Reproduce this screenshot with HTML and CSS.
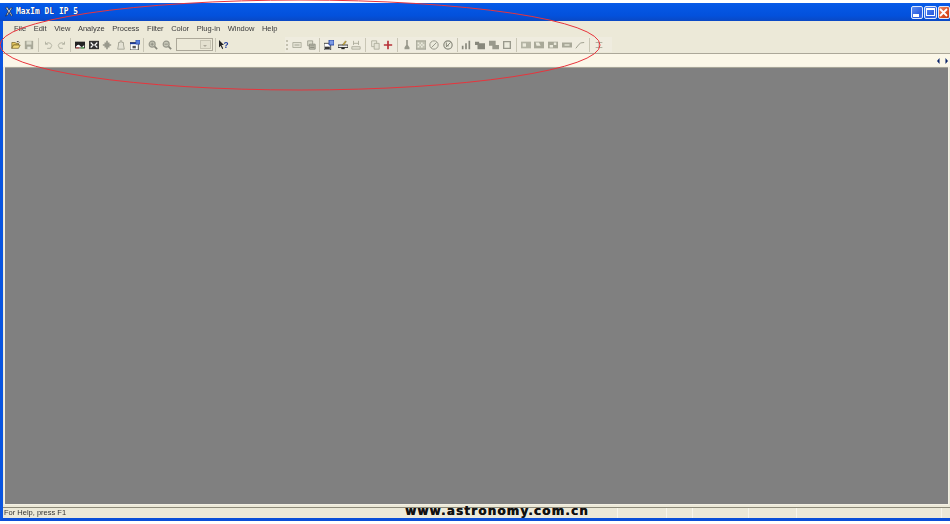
FILE: index.html
```html
<!DOCTYPE html>
<html lang="en">
<head>
<meta charset="utf-8">
<title>MaxIm DL IP 5</title>
<link rel="stylesheet" href="styles.css">
</head>
<body>
<div class="window">
  <header class="titlebar">
    <svg class="app-icon" viewBox="0 0 12 12"><path d="M2 1l3 4-3 6 3-2 1-3 3 5 1-1-3-5 3-4-2 0-2 3-2-4z" fill="#fff" stroke="#111" stroke-width=".7"/></svg>
    <span class="title">MaxIm DL IP 5</span>
    <div class="caption-buttons">
      <div class="cap cap-blue"><span class="min-glyph"></span></div>
      <div class="cap cap-blue"><span class="max-glyph"></span></div>
      <div class="cap cap-red"><svg viewBox="0 0 9 9"><path d="M1 1l7 7M8 1l-7 7" stroke="#fff" stroke-width="1.8"/></svg></div>
    </div>
  </header>
  <nav class="menubar">
    <span>File</span><span>Edit</span><span>View</span><span>Analyze</span><span>Process</span><span>Filter</span><span>Color</span><span>Plug-in</span><span>Window</span><span>Help</span>
  </nav>
  <div class="toolbars">
    <div class="toolbar tb-main">
      <i class="btn"><svg viewBox="0 0 12 12"><path d="M1 3h4l1 1h3v2H3L1 10z" fill="#e8c860" stroke="#6b5a20" stroke-width=".8"/><path d="M1 10l2-4h8l-2 4z" fill="#f0d878" stroke="#6b5a20" stroke-width=".8"/><path d="M7 2q2-1 3 1" stroke="#333" fill="none"/></svg></i>
      <i class="btn"><svg viewBox="0 0 12 12"><path d="M1 1h10v10H1z" fill="#a8a898"/><path d="M3 1.5h6v4H3z" fill="#dcdccc"/><path d="M4 8h4v3H4z" fill="#e4e4d8"/></svg></i>
      <i class="sep"></i>
      <i class="btn"><svg viewBox="0 0 12 12"><path d="M3 5q3-3 6-1t0 6H5M3 2v3h3" fill="none" stroke="#b0b0a0" stroke-width="1.1"/></svg></i>
      <i class="btn"><svg viewBox="0 0 12 12"><path d="M9 5q-3-3-6-1t0 6h4M9 2v3H6" fill="none" stroke="#b0b0a0" stroke-width="1.1"/></svg></i>
      <i class="sep"></i>
      <i class="btn"><svg viewBox="0 0 12 12"><path d="M0 2h12v8H0z" fill="#222"/><path d="M1 8q3-4 5-1t5-1v3H1z" fill="#fff"/><path d="M1 9h4v1H1z" fill="#c33"/><path d="M7 9h4v1H7z" fill="#3a3"/></svg></i>
      <i class="btn"><svg viewBox="0 0 12 12"><path d="M0 1h12v10H0z" fill="#333"/><path d="M2 3l3 3-3 3M10 3L7 6l3 3" fill="none" stroke="#fff" stroke-width="1.4"/></svg></i>
      <i class="btn"><svg viewBox="0 0 12 12"><path d="M5 1h2v2h2v2h2v2H9v2H7v2H5V9H3V7H1V5h2V3h2z" fill="#99998c"/></svg></i>
      <i class="btn"><svg viewBox="0 0 12 12"><path d="M3 6V3h2V1h2v2h2v3l1 5H2z" fill="#e4e2d4" stroke="#a0a090"/></svg></i>
      <i class="btn"><svg viewBox="0 0 12 12"><path d="M0 3h10v9H0z" fill="#fff" stroke="#333"/><path d="M0 3h10v2H0z" fill="#1c3a9c"/><path d="M7 0h5v5H7z" fill="#5a7fd8" stroke="#1c3a9c" stroke-width=".6"/><path d="M3 7h4v3H3z" fill="#555"/></svg></i>
      <i class="sep"></i>
      <i class="btn"><svg viewBox="0 0 12 12"><circle cx="5" cy="5" r="3.6" fill="#c8c8b8" stroke="#99998c" stroke-width="1.4"/><path d="M3 5h4M5 3v4" stroke="#88887c"/><path d="M8 8l3 3" stroke="#88887c" stroke-width="2"/></svg></i>
      <i class="btn"><svg viewBox="0 0 12 12"><circle cx="5" cy="5" r="3.6" fill="#c8c8b8" stroke="#99998c" stroke-width="1.4"/><path d="M3 5h4" stroke="#88887c"/><path d="M8 8l3 3" stroke="#88887c" stroke-width="2"/></svg></i>
      <div class="combo"><span class="combo-arrow"></span></div>
      <i class="sep"></i>
      <i class="btn"><svg viewBox="0 0 12 12"><path d="M0 0v9l2-2 2 4 1-1-2-4h3z" fill="#222"/><text x="5.500" y="9" class="help-mark">?</text></svg></i>
    </div>
    <div class="toolbar tb-second">
      <i class="grip"></i>
      <i class="btn"><svg viewBox="0 0 12 12"><path d="M1 3h10v6H1z" fill="#e4e2d4" stroke="#a8a898"/><path d="M3 5h6v2H3z" fill="#c0c0b0"/></svg></i>
      <i class="btn"><svg viewBox="0 0 12 12"><path d="M2 1h6v6H2z" fill="#dcdccc" stroke="#99998c"/><path d="M4 5h7v6H4z" fill="#c4c4b4" stroke="#88887c"/><path d="M5 7h5M5 9h5" stroke="#88887c"/></svg></i>
      <i class="sep"></i>
      <i class="btn"><svg viewBox="0 0 12 12"><path d="M0 4h8v8H0z" fill="#fff" stroke="#333"/><path d="M1 8h6v3H1z" fill="#333"/><path d="M6 0h6v6H6z" fill="#7d9be4" stroke="#1c3a9c"/></svg></i>
      <i class="btn"><svg viewBox="0 0 12 12"><path d="M0 6h12v3H0z" fill="#eee" stroke="#222"/><path d="M4 9h4v2H4z" fill="#222"/><path d="M5 6l4-5 1 1-3 4z" fill="#d8b030" stroke="#554" stroke-width=".5"/></svg></i>
      <i class="btn"><svg viewBox="0 0 12 12"><path d="M1 8h10v3H1z" fill="#e4e2d4" stroke="#a8a898"/><path d="M3 1v5M9 1v5M3 4h6" stroke="#a8a898"/></svg></i>
      <i class="sep"></i>
      <i class="btn"><svg viewBox="0 0 12 12"><path d="M2 1h6v7H2z" fill="#ecebdd" stroke="#a8a898"/><path d="M5 4h6v7H5z" fill="#e4e2d4" stroke="#a8a898"/></svg></i>
      <i class="btn"><svg viewBox="0 0 12 12"><path d="M5 1h2v4h4v2H7v4H5V7H1V5h4z" fill="#b83038"/></svg></i>
      <i class="sep"></i>
      <i class="btn"><svg viewBox="0 0 12 12"><path d="M5 0h2v6l2 3v2H3V9l2-3z" fill="#99998c"/></svg></i>
      <i class="btn"><svg viewBox="0 0 12 12"><path d="M0 1h12v10H0z" fill="#c0c0b0" stroke="#99998c"/><path d="M2 3h2v2H2zM6 3h2v2H6zM4 5h2v2H4zM8 5h2v2H8zM2 7h2v2H2zM6 7h2v2H6z" fill="#ecebdd"/></svg></i>
      <i class="btn"><svg viewBox="0 0 12 12"><circle cx="6" cy="6" r="5" fill="#ecebdd" stroke="#99998c" stroke-width="1.2"/><path d="M3 9l6-6" stroke="#99998c" stroke-width="1.2"/></svg></i>
      <i class="btn"><svg viewBox="0 0 12 12"><circle cx="6" cy="6" r="5" fill="#ecebdd" stroke="#88887c" stroke-width="1.4"/><path d="M3 9l6-6M4 3v4h3" fill="none" stroke="#88887c" stroke-width="1.2"/></svg></i>
      <i class="sep"></i>
      <i class="btn"><svg viewBox="0 0 12 12"><path d="M1 7h2v4H1zM5 4h2v7H5zM9 1h2v10H9z" fill="#88887c"/></svg></i>
      <i class="btn"><svg viewBox="0 0 12 12"><path d="M0 2h5v2h7v7H3V6H0z" fill="#88887c"/></svg></i>
      <i class="btn"><svg viewBox="0 0 12 12"><path d="M0 1h8v5h4v5H4V7H0z" fill="#99998c"/></svg></i>
      <i class="btn"><svg viewBox="0 0 12 12"><path d="M2 2h8v8H2z" fill="#ecebdd" stroke="#99998c" stroke-width="1.6"/></svg></i>
      <i class="sep"></i>
      <i class="btn"><svg viewBox="0 0 12 12"><path d="M0 2h12v8H0z" fill="#b4b4a4"/><path d="M2 4h4v4H2z" fill="#ecebdd"/></svg></i>
      <i class="btn"><svg viewBox="0 0 12 12"><path d="M0 2h12v8H0z" fill="#a8a898"/><path d="M2 3h4l2 4H3z" fill="#ecebdd"/></svg></i>
      <i class="btn"><svg viewBox="0 0 12 12"><path d="M0 2h12v8H0z" fill="#a8a898"/><path d="M2 6h4v3H2zM7 3h3v3H7z" fill="#ecebdd"/></svg></i>
      <i class="btn"><svg viewBox="0 0 12 12"><path d="M0 3h12v6H0z" fill="#a8a898"/><path d="M3 5h6v2H3z" fill="#dcdccc"/></svg></i>
      <i class="btn"><svg viewBox="0 0 12 12"><path d="M1 10l4-5q1-2 6-2" fill="none" stroke="#a0a090" stroke-width="1.2"/></svg></i>
      <i class="sep"></i>
      <i class="btn"><svg viewBox="0 0 12 12"><path d="M2 3h8M2 9h8M6 3v6" stroke="#b0b0a0" stroke-width="1.2" fill="none"/></svg></i>
    </div>
  </div>
  <div class="tabstrip">
    <svg class="tab-arrows" viewBox="0 0 13 7"><path d="M3 0v7L0 3.500zM10 0v7l3-3.500z" fill="#0a246a"/></svg>
  </div>
  <main class="workspace"></main>
  <footer class="statusbar">
    <span class="pane pane-text">For Help, press F1</span>
    <span class="pane pane-a"></span>
    <span class="pane pane-b"></span>
    <span class="pane pane-c"></span>
    <span class="pane pane-d"></span>
    <span class="pane pane-e"></span>
    <span class="pane pane-f"></span>
  </footer>
</div>
<div class="watermark">www.astronomy.com.cn</div>
<svg class="ellipse" viewBox="0 0 950 524"><ellipse cx="300" cy="45" rx="300" ry="45" fill="none" stroke="#e8343c" stroke-width="1"/></svg>
</body>
</html>
```
FILE: styles.css
```css
* { box-sizing: border-box; }
html, body { margin: 0; padding: 0; background: #fff; overflow: hidden; }
body { width: 950px; height: 524px; position: relative; font-family: "Liberation Sans", Arial, sans-serif; padding-top: 3px; }

.window {
  height: 518px;
  display: flex;
  flex-direction: column;
  background: #ece9d8;
  border-left: 3px solid #0a55e0;
  border-bottom: 3px solid #0a4fd8;
}

.titlebar {
  height: 18px;
  margin-left: -3px;
  flex: none;
  display: flex;
  align-items: center;
  padding-left: 4px;
  background: linear-gradient(#0a5ce8 0, #0558e6 12%, #0351dc 70%, #0a48c4 100%);
}
.app-icon { width: 10px; height: 12px; flex: none; }
.title {
  margin-left: 2px;
  color: #fff;
  font: bold 8px/1 "DejaVu Sans Mono", monospace;
  letter-spacing: -0.050px;
  text-shadow: 1px 0 0 #0a2a80;
  white-space: nowrap;
}
.caption-buttons { margin-left: auto; display: flex; gap: 1px; }
.cap {
  width: 12.500px;
  height: 13px;
  border: 1px solid #dfe8fb;
  border-radius: 2px;
  display: flex;
  align-items: center;
  justify-content: center;
  position: relative;
}
.cap-blue { background: linear-gradient(135deg, #5c8cf0, #2a5ce0 70%, #4470e8); }
.cap-red { background: linear-gradient(135deg, #ec8a68, #d8481c 70%, #c83a10); }
.cap svg { width: 9px; height: 9px; }
.min-glyph { width: 6px; height: 3px; background: #fff; align-self: flex-end; margin-bottom: 1px; margin-right: 2px; }
.max-glyph { width: 9px; height: 8px; border: 1px solid #fff; border-top-width: 2px; }

.menubar {
  height: 15px;
  flex: none;
  display: flex;
  align-items: center;
  gap: 7.600px;
  padding-left: 11px;
  font-size: 7.500px;
  color: #3a3a3a;
  filter: blur(0.3px);
}

.toolbars {
  height: 18px;
  flex: none;
  display: flex;
  align-items: center;
  padding-left: 6px;
  border-bottom: 1px solid #aca899;
}
.toolbar { display: flex; align-items: center; height: 15px; }
.tb-second { margin-left: 54px; background: #efecdf; padding-right: 6px; }
.btn { width: 13.600px; height: 14px; flex: none; display: flex; align-items: center; justify-content: center; }
.btn svg { width: 10px; height: 10px; display: block; filter: blur(0.35px); }
.sep { width: 5px; height: 14px; flex: none; position: relative; }
.sep::before { content: ""; position: absolute; left: 2px; top: 0; bottom: 0; width: 1px; background: #c9c6b5; }
.grip { width: 4px; height: 10px; flex: none; border-left: 2px dotted #c4c1b0; margin-left: 1px; }
.combo {
  width: 37px;
  height: 13px;
  margin-left: 2px;
  background: #ece9d8;
  border: 1px solid #aca899;
  display: flex;
  justify-content: flex-end;
  flex: none;
}
.combo-arrow { width: 11px; margin: 1px; background: #e4e1d0; border: 1px solid #c8c5b4; position: relative; }
.combo-arrow::after {
  content: "";
  position: absolute;
  left: 2px;
  top: 4px;
  border: 2.500px solid transparent;
  border-top-color: #aca899;
}
.help-mark { font: bold 10px "Liberation Sans", sans-serif; fill: #1c3a9c; }

.tabstrip {
  height: 13px;
  flex: none;
  background: #fbf7e8;
  display: flex;
  align-items: center;
  justify-content: flex-end;
  padding-right: 2px;
}
.tab-arrows { width: 11px; height: 6px; }

.workspace {
  flex: 1;
  margin: 0 2px 3px 2px;
  background: #808080;
  border-top: 1px solid #a8a698;
  outline: 1px solid #f4f1e4;
}

.statusbar {
  height: 11px;
  flex: none;
  display: flex;
  border-top: 1px solid #8d8a7a;
  font-size: 7.500px;
  line-height: 10px;
  color: #333;
}
.pane { display: block; height: 100%; border-right: 1px solid #f8f6ec; flex: none; }
.pane-text { width: 615px; padding-left: 1px; filter: blur(0.25px); }
.pane-a { width: 49px; }
.pane-b { width: 26px; }
.pane-c { width: 56px; }
.pane-d { width: 48px; }
.pane-e { width: 145px; }
.pane-f { width: 8px; border-right: 0; }

.watermark {
  position: absolute;
  left: 405px;
  top: 504px;
  font: bold 12px/14px "DejaVu Sans", sans-serif;
  letter-spacing: 1.150px;
  color: #111;
  text-shadow: 0.4px 0 0 #111;
  white-space: nowrap;
}
.ellipse { position: absolute; left: 0; top: 0; width: 950px; height: 524px; pointer-events: none; }
```
